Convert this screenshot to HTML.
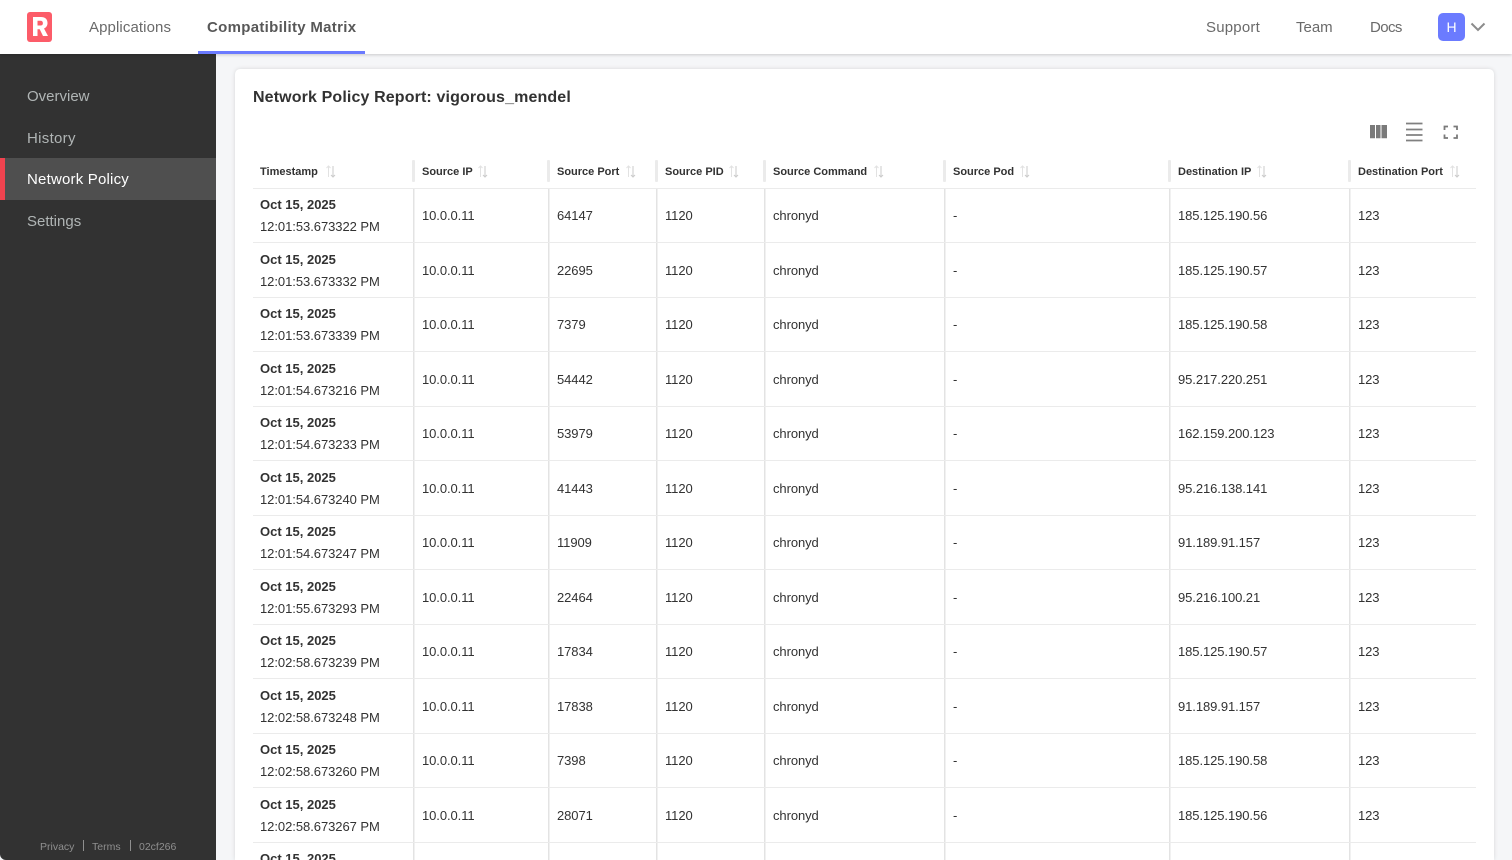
<!DOCTYPE html>
<html><head><meta charset="utf-8"><style>
*{box-sizing:border-box;margin:0;padding:0}
html,body{width:1512px;height:860px;overflow:hidden;background:#f5f6f8;font-family:"Liberation Sans",sans-serif;color:#323232}
#w{position:relative;width:1512px;height:860px;overflow:hidden;background:#f5f6f8}
.a{position:absolute;white-space:nowrap}
#top{position:absolute;left:0;top:0;width:1512px;height:54px;background:#fff;box-shadow:0 1px 3px rgba(0,0,0,.18);z-index:3}
.nav{position:absolute;top:18px;font-size:15px;line-height:20px;color:#6a6a6a;white-space:nowrap}
#side{position:absolute;left:0;top:54px;width:216px;height:806px;background:#323232;z-index:2;border-bottom-left-radius:6px}
.si{position:absolute;left:27px;font-size:15px;line-height:20px;color:#b0b5b5}
#card{position:absolute;left:235px;top:69px;width:1259px;height:791px;background:#fff;border-radius:5px 5px 0 0;box-shadow:0 0 4px rgba(0,0,0,.13)}
.h{position:absolute;top:166px;font-size:11px;line-height:13px;font-weight:bold;color:#323232;white-space:nowrap}
.hs{position:absolute;top:160px;width:3px;height:22px;background:#ebebeb;border-radius:1px}
.vl{position:absolute;top:188px;width:2px;height:672px;background:linear-gradient(90deg,#e3e3e3 50%,#f1f1f1 50%)}
.hl{position:absolute;left:253px;width:1223px;height:1px;background:#ebebeb}
.s{position:absolute;top:165px}
.c{position:absolute;font-size:13px;line-height:16px;color:#323232;white-space:nowrap;letter-spacing:-.08px}
.d{position:absolute;left:260px;font-size:13px;line-height:16px;font-weight:bold;color:#323232;white-space:nowrap}
.t{position:absolute;left:260px;font-size:13px;line-height:16px;color:#323232;white-space:nowrap;letter-spacing:-.05px}
.r{position:absolute;left:0;top:0;width:1512px;height:54px}
.r .d{top:9px}.r .t{top:31px}.r .c{top:20px}
.c1{left:422px}.c2{left:557px}.c3{left:665px}.c4{left:773px}.c5{left:953px}.c6{left:1178px}.c7{left:1358px}
</style></head><body><div id="w">
<div id="top">
<svg class="a" style="left:27px;top:12px" width="26" height="30" viewBox="0 0 26 30"><rect width="25" height="30" rx="3" fill="#fc5c69"/><path fill-rule="evenodd" d="M6 24V5h8c4 0 6.500 2 6.500 6 0 2.700-1.300 4.600-3.500 5.500L21 24h-5l-3.300-6.800H10.500V24zM10.500 13.500h3c1.500 0 2.400-.8 2.400-2.300s-.9-2.400-2.400-2.400h-3z" fill="#fff"/></svg>
<div class="nav" style="left:89px;letter-spacing:.1px">Applications</div>
<div class="nav" style="left:207px;font-weight:bold;color:#585858;letter-spacing:.3px">Compatibility Matrix</div>
<div class="a" style="left:198px;top:51px;width:167px;height:3px;background:#6b7bff"></div>
<div class="nav" style="left:1206px;letter-spacing:.2px">Support</div>
<div class="nav" style="left:1296px">Team</div>
<div class="nav" style="left:1370px;letter-spacing:-.6px">Docs</div>
<div class="a" style="left:1438px;top:13px;width:27px;height:28px;background:#6b7bff;border-radius:5px;color:#fff;font-size:14px;line-height:28px;text-align:center">H</div>
<svg class="a" style="left:1470px;top:22px" width="16" height="10" viewBox="0 0 16 10"><path d="M1.500 1.500L8 8l6.500-6.500" fill="none" stroke="#8c8c8c" stroke-width="2"/></svg>
</div>
<div id="side">
<div class="si" style="top:33px">Overview</div>
<div class="si" style="top:75px;letter-spacing:.3px">History</div>
<div class="a" style="left:0;top:104px;width:216px;height:42px;background:#4f4f4f;border-left:5px solid #f0434f"></div>
<div class="si" style="top:116px;color:#fff;letter-spacing:.2px">Network Policy</div>
<div class="si" style="top:158px">Settings</div>
<div class="a" style="left:40px;top:786px;font-size:10.500px;line-height:14px;color:#8f8f8f">Privacy</div>
<div class="a" style="left:83px;top:786px;width:1px;height:11px;background:#8f8f8f"></div>
<div class="a" style="left:92px;top:786px;font-size:10.500px;line-height:14px;color:#8f8f8f">Terms</div>
<div class="a" style="left:130px;top:786px;width:1px;height:11px;background:#8f8f8f"></div>
<div class="a" style="left:139px;top:786px;font-size:10.500px;line-height:14px;color:#8f8f8f">02cf266</div>
</div>
<div id="card"></div>
<div class="a" style="left:253px;top:87px;font-size:16px;line-height:21px;font-weight:bold;color:#323232;letter-spacing:.13px">Network Policy Report: vigorous_mendel</div>
<svg class="a" style="left:1368px;top:122px" width="90" height="20" viewBox="0 0 90 20"><path d="M2 3h5v13.300H2zM8 3h4.500v13.300H8zM13.500 3h5.500v13.300h-5.500z" fill="#7a7a7a"/><path d="M38 1.500h16.500M38 7.500h16.500M38 13h16.500M38 18.500h16.500" stroke="#808080" stroke-width="1.800" fill="none"/><path d="M76.500 8V4.500H80M85.500 4.500H89V8M89 12.500V16h-3.500M80 16h-3.500v-3.500" stroke="#7a7a7a" stroke-width="1.800" fill="none"/></svg>

<div class="h" style="left:260px">Timestamp</div>
<div class="h" style="left:422px">Source IP</div>
<div class="h" style="left:557px">Source Port</div>
<div class="h" style="left:665px">Source PID</div>
<div class="h" style="left:773px">Source Command</div>
<div class="h" style="left:953px">Source Pod</div>
<div class="h" style="left:1178px">Destination IP</div>
<div class="h" style="left:1358px">Destination Port</div>

<svg class="s" style="left:325px" width="12" height="13" viewBox="0 0 12 13"><path d="M3.500 12V1M1.500 3L3.500 1 5.500 3" stroke="#e2e2e2" stroke-width="1" fill="none"/><path d="M8 1v11M6 10L8 12 10 10" stroke="#cbcbcb" stroke-width="1" fill="none"/></svg>
<svg class="s" style="left:477px" width="12" height="13" viewBox="0 0 12 13"><path d="M3.500 12V1M1.500 3L3.500 1 5.500 3" stroke="#e2e2e2" stroke-width="1" fill="none"/><path d="M8 1v11M6 10L8 12 10 10" stroke="#cbcbcb" stroke-width="1" fill="none"/></svg>
<svg class="s" style="left:625px" width="12" height="13" viewBox="0 0 12 13"><path d="M3.500 12V1M1.500 3L3.500 1 5.500 3" stroke="#e2e2e2" stroke-width="1" fill="none"/><path d="M8 1v11M6 10L8 12 10 10" stroke="#cbcbcb" stroke-width="1" fill="none"/></svg>
<svg class="s" style="left:728px" width="12" height="13" viewBox="0 0 12 13"><path d="M3.500 12V1M1.500 3L3.500 1 5.500 3" stroke="#e2e2e2" stroke-width="1" fill="none"/><path d="M8 1v11M6 10L8 12 10 10" stroke="#cbcbcb" stroke-width="1" fill="none"/></svg>
<svg class="s" style="left:873px" width="12" height="13" viewBox="0 0 12 13"><path d="M3.500 12V1M1.500 3L3.500 1 5.500 3" stroke="#e2e2e2" stroke-width="1" fill="none"/><path d="M8 1v11M6 10L8 12 10 10" stroke="#cbcbcb" stroke-width="1" fill="none"/></svg>
<svg class="s" style="left:1019px" width="12" height="13" viewBox="0 0 12 13"><path d="M3.500 12V1M1.500 3L3.500 1 5.500 3" stroke="#e2e2e2" stroke-width="1" fill="none"/><path d="M8 1v11M6 10L8 12 10 10" stroke="#cbcbcb" stroke-width="1" fill="none"/></svg>
<svg class="s" style="left:1256px" width="12" height="13" viewBox="0 0 12 13"><path d="M3.500 12V1M1.500 3L3.500 1 5.500 3" stroke="#e2e2e2" stroke-width="1" fill="none"/><path d="M8 1v11M6 10L8 12 10 10" stroke="#cbcbcb" stroke-width="1" fill="none"/></svg>
<svg class="s" style="left:1449px" width="12" height="13" viewBox="0 0 12 13"><path d="M3.500 12V1M1.500 3L3.500 1 5.500 3" stroke="#e2e2e2" stroke-width="1" fill="none"/><path d="M8 1v11M6 10L8 12 10 10" stroke="#cbcbcb" stroke-width="1" fill="none"/></svg>

<div class="hs" style="left:412px"></div><div class="hs" style="left:547px"></div><div class="hs" style="left:655px"></div><div class="hs" style="left:763px"></div><div class="hs" style="left:943px"></div><div class="hs" style="left:1168px"></div><div class="hs" style="left:1348px"></div>
<div class="vl" style="left:413px"></div><div class="vl" style="left:548px"></div><div class="vl" style="left:656px"></div><div class="vl" style="left:764px"></div><div class="vl" style="left:944px"></div><div class="vl" style="left:1169px"></div><div class="vl" style="left:1349px"></div>

<div class="hl" style="top:188px"></div><div class="hl" style="top:242px"></div><div class="hl" style="top:297px"></div><div class="hl" style="top:351px"></div><div class="hl" style="top:406px"></div><div class="hl" style="top:460px"></div><div class="hl" style="top:515px"></div><div class="hl" style="top:569px"></div><div class="hl" style="top:624px"></div><div class="hl" style="top:678px"></div><div class="hl" style="top:733px"></div><div class="hl" style="top:787px"></div><div class="hl" style="top:842px"></div>

<div class="r" style="top:188px"><div class="d">Oct 15, 2025</div><div class="t">12:01:53.673322 PM</div><div class="c c1">10.0.0.11</div><div class="c c2">64147</div><div class="c c3">1120</div><div class="c c4">chronyd</div><div class="c c5">-</div><div class="c c6">185.125.190.56</div><div class="c c7">123</div></div>
<div class="r" style="top:243px"><div class="d">Oct 15, 2025</div><div class="t">12:01:53.673332 PM</div><div class="c c1">10.0.0.11</div><div class="c c2">22695</div><div class="c c3">1120</div><div class="c c4">chronyd</div><div class="c c5">-</div><div class="c c6">185.125.190.57</div><div class="c c7">123</div></div>
<div class="r" style="top:297px"><div class="d">Oct 15, 2025</div><div class="t">12:01:53.673339 PM</div><div class="c c1">10.0.0.11</div><div class="c c2">7379</div><div class="c c3">1120</div><div class="c c4">chronyd</div><div class="c c5">-</div><div class="c c6">185.125.190.58</div><div class="c c7">123</div></div>
<div class="r" style="top:352px"><div class="d">Oct 15, 2025</div><div class="t">12:01:54.673216 PM</div><div class="c c1">10.0.0.11</div><div class="c c2">54442</div><div class="c c3">1120</div><div class="c c4">chronyd</div><div class="c c5">-</div><div class="c c6">95.217.220.251</div><div class="c c7">123</div></div>
<div class="r" style="top:406px"><div class="d">Oct 15, 2025</div><div class="t">12:01:54.673233 PM</div><div class="c c1">10.0.0.11</div><div class="c c2">53979</div><div class="c c3">1120</div><div class="c c4">chronyd</div><div class="c c5">-</div><div class="c c6">162.159.200.123</div><div class="c c7">123</div></div>
<div class="r" style="top:461px"><div class="d">Oct 15, 2025</div><div class="t">12:01:54.673240 PM</div><div class="c c1">10.0.0.11</div><div class="c c2">41443</div><div class="c c3">1120</div><div class="c c4">chronyd</div><div class="c c5">-</div><div class="c c6">95.216.138.141</div><div class="c c7">123</div></div>
<div class="r" style="top:515px"><div class="d">Oct 15, 2025</div><div class="t">12:01:54.673247 PM</div><div class="c c1">10.0.0.11</div><div class="c c2">11909</div><div class="c c3">1120</div><div class="c c4">chronyd</div><div class="c c5">-</div><div class="c c6">91.189.91.157</div><div class="c c7">123</div></div>
<div class="r" style="top:570px"><div class="d">Oct 15, 2025</div><div class="t">12:01:55.673293 PM</div><div class="c c1">10.0.0.11</div><div class="c c2">22464</div><div class="c c3">1120</div><div class="c c4">chronyd</div><div class="c c5">-</div><div class="c c6">95.216.100.21</div><div class="c c7">123</div></div>
<div class="r" style="top:624px"><div class="d">Oct 15, 2025</div><div class="t">12:02:58.673239 PM</div><div class="c c1">10.0.0.11</div><div class="c c2">17834</div><div class="c c3">1120</div><div class="c c4">chronyd</div><div class="c c5">-</div><div class="c c6">185.125.190.57</div><div class="c c7">123</div></div>
<div class="r" style="top:679px"><div class="d">Oct 15, 2025</div><div class="t">12:02:58.673248 PM</div><div class="c c1">10.0.0.11</div><div class="c c2">17838</div><div class="c c3">1120</div><div class="c c4">chronyd</div><div class="c c5">-</div><div class="c c6">91.189.91.157</div><div class="c c7">123</div></div>
<div class="r" style="top:733px"><div class="d">Oct 15, 2025</div><div class="t">12:02:58.673260 PM</div><div class="c c1">10.0.0.11</div><div class="c c2">7398</div><div class="c c3">1120</div><div class="c c4">chronyd</div><div class="c c5">-</div><div class="c c6">185.125.190.58</div><div class="c c7">123</div></div>
<div class="r" style="top:788px"><div class="d">Oct 15, 2025</div><div class="t">12:02:58.673267 PM</div><div class="c c1">10.0.0.11</div><div class="c c2">28071</div><div class="c c3">1120</div><div class="c c4">chronyd</div><div class="c c5">-</div><div class="c c6">185.125.190.56</div><div class="c c7">123</div></div>
<div class="r" style="top:842px"><div class="d">Oct 15, 2025</div></div>
</div></body></html>
